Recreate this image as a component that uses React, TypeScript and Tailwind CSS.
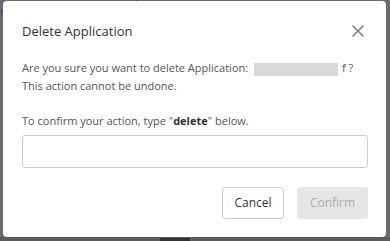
import React from "react";

export default function App() {
  return (
    <div
      className="relative h-[241px] w-[390px] overflow-hidden bg-[#6b6b6b]"
      style={{ fontFamily: '"Open Sans", "Liberation Sans", sans-serif' }}
    >
      <div className="absolute left-0 top-[6px] text-[12px] leading-none text-[#1d4f91]">n</div>
      <div className="absolute left-[136px] top-0 h-[2px] w-px bg-[#444]" />
      <div className="absolute bottom-0 left-0 h-[4px] w-full bg-[#5c5c5c]" />
      <div className="absolute bottom-0 left-[160px] h-[3px] w-[30px] bg-[#333]" />
      <div className="relative ml-[3px] mt-px flex h-[236px] w-[383px] flex-col rounded-[4px] bg-white px-[19px] pt-[20px]">
        <div className="flex h-[20px] items-center justify-between">
          <span className="text-[13px] leading-[20px] text-[#333]">Delete Application</span>
          <svg width="12" height="12" viewBox="0 0 12 12" className="mr-[3px]">
            <path d="M1 1 L11 11 M11 1 L1 11" stroke="#777" strokeWidth="1.5" strokeLinecap="round" />
          </svg>
        </div>
        <div className="mt-[18px] text-[11px] leading-[18px] text-[#555]">
          <p className="whitespace-nowrap">
            Are you sure you want to delete Application:{" "}
            <span className="ml-[3px] mr-[4px] inline-block h-[13px] w-[84px] bg-[#d9d9d9] align-middle" />
            f ?
          </p>
          <p>This action cannot be undone.</p>
          <p className="mt-[17px]">
            To confirm your action, type "<span className="font-bold text-[#333]">delete</span>" below.
          </p>
        </div>
        <input
          className="mt-[5px] h-[33px] w-[346px] rounded-[3px] border border-[#ccc] outline-none"
          type="text"
        />
        <div className="mt-[19px] flex justify-end gap-[13px]">
          <button className="h-[32px] w-[62px] rounded-[3px] border border-[#ccc] bg-white text-[12px] text-[#333]">
            Cancel
          </button>
          <button className="mr-[-1px] h-[32px] w-[71px] rounded-[3px] bg-[#e6e6e6] text-[12px] text-[#aaa]">
            Confirm
          </button>
        </div>
      </div>
    </div>
  );
}
